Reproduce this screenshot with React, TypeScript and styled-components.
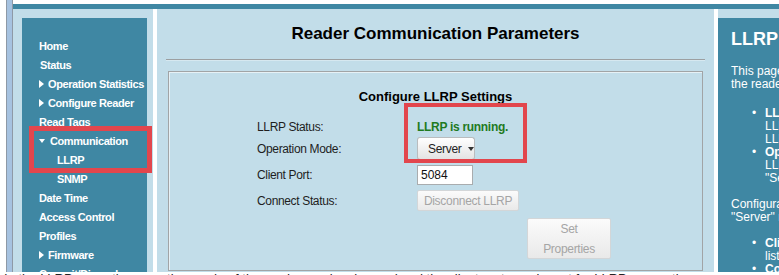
import React from 'react';
import styled, { createGlobalStyle } from 'styled-components';

const teal = '#3f87a3';
const paleBlue = '#c2dde9';
const annotationRed = '#e2464d';

const GlobalStyle = createGlobalStyle`
  html, body {
    margin: 0;
    padding: 0;
    background: #fff;
  }
`;

const Shot = styled.div`
  position: relative;
  width: 779px;
  height: 275px;
  overflow: hidden;
  display: flex;
  flex-direction: column;
  background: #fff;
  font-family: "Liberation Sans", Arial, sans-serif;
`;

const Frame = styled.div`
  display: flex;
  height: 272px;
  flex-shrink: 0;
`;

const WindowEdge = styled.div`
  margin-left: 6px;
  width: 7px;
  background: linear-gradient(90deg, #8e99a6 0 1px, #a6c2e0 1px 6px, #8e99a6 6px 7px);
`;

const Page = styled.div`
  flex: 1;
  display: flex;
  flex-direction: column;
  padding-top: 4px;
  min-width: 0;
`;

const TopBar = styled.div`
  height: 5px;
  background: ${teal};
`;

const Columns = styled.div`
  flex: 1;
  display: flex;
  gap: 4px;
  min-height: 0;
`;

const NavFrame = styled.div`
  width: 140px;
  flex-shrink: 0;
  box-sizing: border-box;
  padding: 9px 6px 0 9px;
  background: ${paleBlue};
`;

const Nav = styled.nav`
  height: 100%;
  box-sizing: border-box;
  padding: 18px 0 0 17px;
  background: ${teal};
`;

const NavItem = styled.div<{ $indent?: number }>`
  display: flex;
  align-items: center;
  height: 19px;
  padding-left: ${(p) => p.$indent ?? 0}px;
  color: #fff;
  font-size: 11px;
  font-weight: bold;
  letter-spacing: -0.4px;
  white-space: nowrap;
`;

const RightArrow = styled.span`
  width: 0;
  height: 0;
  margin-right: 4px;
  border-left: 5px solid #fff;
  border-top: 4px solid transparent;
  border-bottom: 4px solid transparent;
`;

const DownArrow = styled.span`
  width: 0;
  height: 0;
  margin-right: 5px;
  border-top: 4px solid #fff;
  border-left: 3.5px solid transparent;
  border-right: 3.5px solid transparent;
`;

const Main = styled.main`
  width: 557px;
  flex-shrink: 0;
  box-sizing: border-box;
  display: flex;
  flex-direction: column;
  padding: 0 9px;
  background: ${paleBlue};
`;

const Title = styled.h1`
  margin: 15px 0 0;
  font-size: 17px;
  line-height: 20px;
  font-weight: bold;
  text-align: center;
  color: #000;
`;

const Rule = styled.hr`
  margin: 15px 0 0;
  height: 0;
  border: 0;
  border-top: 1px solid #9c9fa1;
  border-bottom: 1px solid #d6e8f0;
`;

const Settings = styled.section`
  flex: 1;
  margin: 10px 2px 1px;
  padding: 17px 0 0 88px;
  border: 1px solid #a1a4a6;
  box-shadow: inset 1px 1px 0 #e6f1f6;
`;

const SettingsTitle = styled.h2`
  margin: 0 0 0 -88px;
  font-size: 13px;
  line-height: 16px;
  font-weight: bold;
  text-align: center;
  color: #000;
`;

const Row = styled.div<{ $top: number }>`
  display: grid;
  grid-template-columns: 160px 194px;
  align-items: center;
  margin-top: ${(p) => p.$top}px;
`;

const Label = styled.span`
  font-size: 12px;
  letter-spacing: -0.35px;
  color: #1e1e1e;
`;

const Running = styled.span`
  font-size: 12px;
  line-height: 16px;
  font-weight: bold;
  letter-spacing: -0.3px;
  color: #1f7a1f;
`;

const DropButton = styled.button`
  display: flex;
  align-items: center;
  gap: 6px;
  width: 58px;
  height: 23px;
  padding: 0 0 0 10px;
  box-sizing: border-box;
  border: 1px solid #b9bcbe;
  border-bottom-color: #a4a7a9;
  border-radius: 3px;
  background: linear-gradient(#ffffff, #e3e3e3);
  font-family: inherit;
  font-size: 12px;
  letter-spacing: -0.3px;
  color: #222;
`;

const Caret = styled.span`
  width: 0;
  height: 0;
  border-top: 4px solid #333;
  border-left: 3.5px solid transparent;
  border-right: 3.5px solid transparent;
`;

const PortInput = styled.input`
  width: 56px;
  height: 20px;
  box-sizing: border-box;
  padding: 0 3px;
  border: 1px solid #a9acae;
  background: #fff;
  font-family: inherit;
  font-size: 12px;
  color: #111;
`;

const DisabledButton = styled.button<{ $w: number; $h: number }>`
  width: ${(p) => p.$w}px;
  height: ${(p) => p.$h}px;
  box-sizing: border-box;
  padding: 0;
  border: 1px solid #d3d6d8;
  border-radius: 2px;
  background: linear-gradient(#fbfbfb, #e9e9e9);
  font-family: inherit;
  font-size: 12px;
  line-height: 20px;
  letter-spacing: -0.3px;
  color: #a5a5a5;
`;

const SetCell = styled.div`
  grid-column: 2;
  display: flex;
  justify-content: flex-end;
`;

const Help = styled.aside`
  flex: 1;
  min-width: 0;
  padding-top: 9px;
  background: ${paleBlue};
`;

const HelpBody = styled.div`
  height: 100%;
  box-sizing: border-box;
  padding: 10px 0 0 13px;
  background: ${teal};
  color: #fff;
  font-size: 12px;
  line-height: 13px;
  white-space: nowrap;
  overflow: hidden;
`;

const HelpTitle = styled.h2`
  margin: 0;
  font-size: 18px;
  line-height: 22px;
  font-weight: bold;
`;

const HelpText = styled.p<{ $top: number }>`
  margin: ${(p) => p.$top}px 0 0;
`;

const HelpList = styled.ul<{ $top: number }>`
  margin: ${(p) => p.$top}px 0 0;
  padding-left: 34px;
  list-style: none;
`;

const HelpItem = styled.li`
  position: relative;

  &::before {
    content: "•";
    position: absolute;
    left: -13px;
    top: 0;
  }
`;

const DocLine = styled.p`
  margin: 0;
  padding-left: 4px;
  font-size: 13px;
  line-height: 13px;
  color: #222;
  white-space: nowrap;
`;

const Annotation = styled.div<{ $x: number; $y: number; $w: number; $h: number; $stroke: number }>`
  position: absolute;
  left: ${(p) => p.$x}px;
  top: ${(p) => p.$y}px;
  width: ${(p) => p.$w}px;
  height: ${(p) => p.$h}px;
  box-sizing: border-box;
  border: ${(p) => p.$stroke}px solid ${annotationRed};
  pointer-events: none;
`;

const menu: { label: string; arrow?: 'right' | 'down'; indent?: number }[] = [
  { label: 'Home' },
  { label: 'Status', indent: 1 },
  { label: 'Operation Statistics', arrow: 'right' },
  { label: 'Configure Reader', arrow: 'right' },
  { label: 'Read Tags' },
  { label: 'Communication', arrow: 'down' },
  { label: 'LLRP', indent: 18 },
  { label: 'SNMP', indent: 18 },
  { label: 'Date Time' },
  { label: 'Access Control' },
  { label: 'Profiles' },
  { label: 'Firmware', arrow: 'right' },
  { label: 'Commit/Discard' },
];

export default function App() {
  return (
    <Shot>
      <GlobalStyle />
      <Frame>
        <WindowEdge />
        <Page>
          <TopBar />
          <Columns>
            <NavFrame>
              <Nav>
                {menu.map((item) => (
                  <NavItem key={item.label} $indent={item.indent}>
                    {item.arrow === 'right' && <RightArrow />}
                    {item.arrow === 'down' && <DownArrow />}
                    {item.label}
                  </NavItem>
                ))}
              </Nav>
            </NavFrame>

            <Main>
              <Title>Reader Communication Parameters</Title>
              <Rule />
              <Settings>
                <SettingsTitle>Configure LLRP Settings</SettingsTitle>
                <Row $top={14}>
                  <Label>LLRP Status:</Label>
                  <Running>LLRP is running.</Running>
                </Row>
                <Row $top={2}>
                  <Label>Operation Mode:</Label>
                  <div>
                    <DropButton type="button">
                      Server <Caret />
                    </DropButton>
                  </div>
                </Row>
                <Row $top={5}>
                  <Label>Client Port:</Label>
                  <div>
                    <PortInput defaultValue="5084" />
                  </div>
                </Row>
                <Row $top={5}>
                  <Label>Connect Status:</Label>
                  <div>
                    <DisabledButton type="button" disabled $w={102} $h={21}>
                      Disconnect LLRP
                    </DisabledButton>
                  </div>
                </Row>
                <Row $top={7}>
                  <SetCell>
                    <DisabledButton type="button" disabled $w={84} $h={41}>
                      Set
                      <br />
                      Properties
                    </DisabledButton>
                  </SetCell>
                </Row>
              </Settings>
            </Main>

            <Help>
              <HelpBody>
                <HelpTitle>LLRP</HelpTitle>
                <HelpText $top={15}>
                  This page lets you view and change the LLRP settings of
                  <br />
                  the reader.
                </HelpText>
                <HelpList $top={16}>
                  <HelpItem>
                    <b>LLRP Status:</b> shows whether the
                    <br />
                    LLRP server is running, and the
                    <br />
                    LLRP connection state.
                  </HelpItem>
                  <HelpItem>
                    <b>Operation Mode:</b> selects the
                    <br />
                    LLRP mode of the reader, either
                    <br />
                    "Server" or "Client".
                  </HelpItem>
                </HelpList>
                <HelpText $top={13}>
                  Configuration items available in
                  <br />
                  "Server" mode:
                </HelpText>
                <HelpList $top={13}>
                  <HelpItem>
                    <b>Client Port:</b> the port the reader
                    <br />
                    listens on for LLRP clients.
                  </HelpItem>
                  <HelpItem>
                    <b>Connect Status:</b> disconnects the client.
                  </HelpItem>
                </HelpList>
              </HelpBody>
            </Help>
          </Columns>
        </Page>
      </Frame>
      <DocLine>
        In the LLRP page, the operation mode of the reader can be changed and the client port may be set for LLRP connections.
      </DocLine>

      <Annotation $x={29} $y={126} $w={123} $h={47} $stroke={5} />
      <Annotation $x={404} $y={103} $w={123} $h={60} $stroke={4} />
    </Shot>
  );
}
